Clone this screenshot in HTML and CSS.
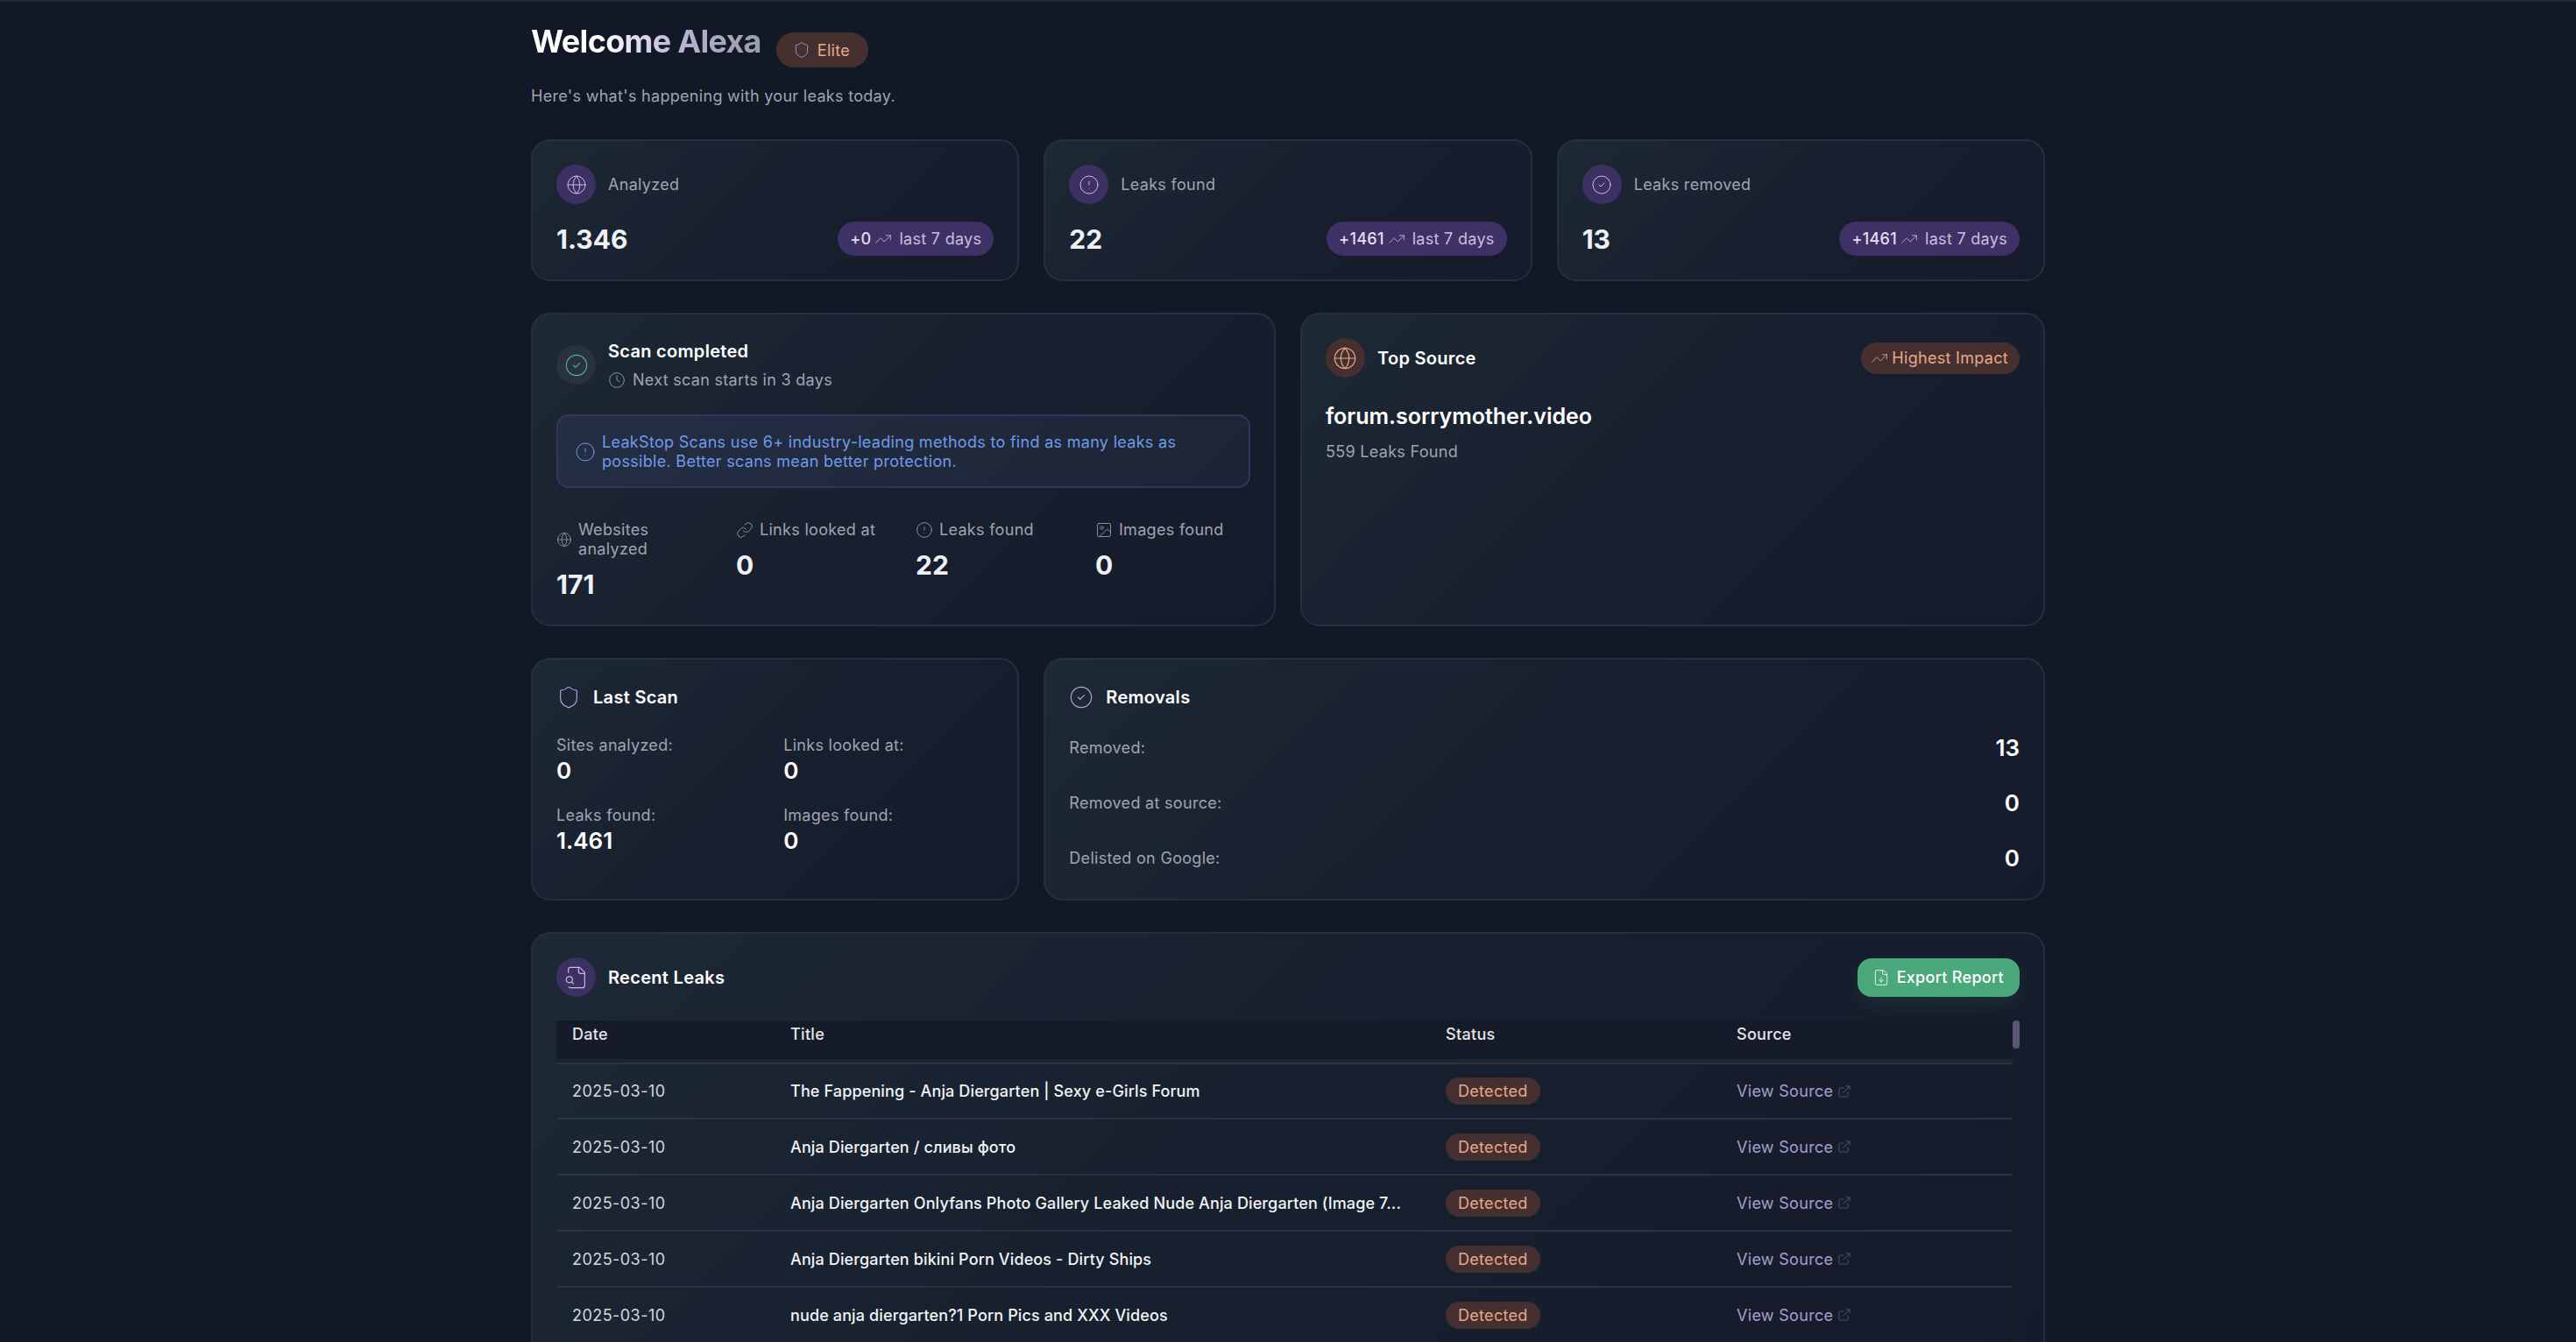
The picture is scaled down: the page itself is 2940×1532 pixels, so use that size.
FILE: index.html
```html
<!DOCTYPE html>
<html lang="en">
<head>
    <meta charset="UTF-8">
    <title>LeakStop Dashboard</title>
    <link rel="stylesheet" href="styles.css">
</head>
<body>
    <svg class="sprite" xmlns="http://www.w3.org/2000/svg">
        <symbol id="i-globe" viewBox="0 0 24 24"><circle cx="12" cy="12" r="10"/><path d="M12 2a14.5 14.5 0 0 0 0 20 14.5 14.5 0 0 0 0-20"/><path d="M2 12h20"/></symbol>
        <symbol id="i-shield" viewBox="0 0 24 24"><path d="M20 13c0 5-3.5 7.5-7.66 8.95a1 1 0 0 1-.67-.01C7.5 20.5 4 18 4 13V6a1 1 0 0 1 1-1c2 0 4.5-1.2 6.24-2.72a1.17 1.17 0 0 1 1.52 0C14.51 3.81 17 5 19 5a1 1 0 0 1 1 1z"/></symbol>
        <symbol id="i-alert" viewBox="0 0 24 24"><circle cx="12" cy="12" r="10"/><path d="M12 8v4"/><path d="M12 16h.01"/></symbol>
        <symbol id="i-check" viewBox="0 0 24 24"><circle cx="12" cy="12" r="10"/><path d="m9 12 2 2 4-4"/></symbol>
        <symbol id="i-trend" viewBox="0 0 24 24"><path d="M22 7l-8.5 8.5-5-5L2 17"/><path d="M16 7h6v6"/></symbol>
        <symbol id="i-clock" viewBox="0 0 24 24"><circle cx="12" cy="12" r="10"/><path d="M12 6v6l4 2"/></symbol>
        <symbol id="i-link" viewBox="0 0 24 24"><path d="M10 13a5 5 0 0 0 7.54.54l3-3a5 5 0 0 0-7.07-7.07l-1.72 1.71"/><path d="M14 11a5 5 0 0 0-7.54-.54l-3 3a5 5 0 0 0 7.07 7.07l1.71-1.71"/></symbol>
        <symbol id="i-image" viewBox="0 0 24 24"><rect x="3" y="3" width="18" height="18" rx="2"/><circle cx="9" cy="9" r="2"/><path d="m21 15-3.086-3.086a2 2 0 0 0-2.828 0L6 21"/></symbol>
        <symbol id="i-filesearch" viewBox="0 0 24 24"><path d="M14 2v4a2 2 0 0 0 2 2h4"/><path d="M4.268 21a2 2 0 0 0 1.727 1H18a2 2 0 0 0 2-2V7l-5-5H6a2 2 0 0 0-2 2v3"/><path d="m9 18-1.5-1.5"/><circle cx="5" cy="14" r="3"/></symbol>
        <symbol id="i-filedown" viewBox="0 0 24 24"><path d="M15 2H6a2 2 0 0 0-2 2v16a2 2 0 0 0 2 2h12a2 2 0 0 0 2-2V7Z"/><path d="M14 2v4a2 2 0 0 0 2 2h4"/><path d="M12 18v-6"/><path d="m9 15 3 3 3-3"/></symbol>
        <symbol id="i-external" viewBox="0 0 24 24"><path d="M15 3h6v6"/><path d="M10 14 21 3"/><path d="M18 13v6a2 2 0 0 1-2 2H5a2 2 0 0 1-2-2V8a2 2 0 0 1 2-2h6"/></symbol>
    </svg>

    <main class="page">
        <header class="welcome">
            <div class="welcome-top">
                <h1>Welcome Alexa</h1>
                <span class="elite"><svg class="icon icon-20 lilac"><use href="#i-shield"/></svg>Elite</span>
            </div>
            <p>Here's what's happening with your leaks today.</p>
        </header>

        <div class="dashboard">
            <section class="card span-2 stat-card">
                <div class="stat-head">
                    <span class="round purple"><svg class="icon icon-24"><use href="#i-globe"/></svg></span>
                    <span class="muted">Analyzed</span>
                </div>
                <div class="stat-foot">
                    <strong class="big">1.346</strong>
                    <span class="week"><b>+0</b><svg class="icon icon-20"><use href="#i-trend"/></svg><em>last 7 days</em></span>
                </div>
            </section>
            <section class="card span-2 stat-card">
                <div class="stat-head">
                    <span class="round purple"><svg class="icon icon-24"><use href="#i-alert"/></svg></span>
                    <span class="muted">Leaks found</span>
                </div>
                <div class="stat-foot">
                    <strong class="big">22</strong>
                    <span class="week"><b>+1461</b><svg class="icon icon-20"><use href="#i-trend"/></svg><em>last 7 days</em></span>
                </div>
            </section>
            <section class="card span-2 stat-card">
                <div class="stat-head">
                    <span class="round purple"><svg class="icon icon-24"><use href="#i-check"/></svg></span>
                    <span class="muted">Leaks removed</span>
                </div>
                <div class="stat-foot">
                    <strong class="big">13</strong>
                    <span class="week"><b>+1461</b><svg class="icon icon-20"><use href="#i-trend"/></svg><em>last 7 days</em></span>
                </div>
            </section>

            <section class="card span-3 scan-card">
                <div class="scan-head">
                    <span class="round slate"><svg class="icon icon-28 green"><use href="#i-check"/></svg></span>
                    <div>
                        <h2>Scan completed</h2>
                        <p class="next muted"><svg class="icon icon-20"><use href="#i-clock"/></svg>Next scan starts in 3 days</p>
                    </div>
                </div>
                <div class="note">
                    <svg class="icon icon-24"><use href="#i-alert"/></svg>
                    <p>LeakStop Scans use 6+ industry-leading methods to find as many leaks as possible. Better scans mean better protection.</p>
                </div>
                <div class="scan-stats">
                    <div>
                        <div class="scan-label muted"><svg class="icon icon-18"><use href="#i-globe"/></svg><span>Websites analyzed</span></div>
                        <strong class="big">171</strong>
                    </div>
                    <div>
                        <div class="scan-label muted"><svg class="icon icon-20"><use href="#i-link"/></svg><span>Links looked at</span></div>
                        <strong class="big">0</strong>
                    </div>
                    <div>
                        <div class="scan-label muted"><svg class="icon icon-20"><use href="#i-alert"/></svg><span>Leaks found</span></div>
                        <strong class="big">22</strong>
                    </div>
                    <div>
                        <div class="scan-label muted"><svg class="icon icon-20"><use href="#i-image"/></svg><span>Images found</span></div>
                        <strong class="big">0</strong>
                    </div>
                </div>
            </section>

            <section class="card span-3 source-card">
                <div class="source-head">
                    <div class="title-row">
                        <span class="round brown"><svg class="icon icon-28 peach"><use href="#i-globe"/></svg></span>
                        <h2>Top Source</h2>
                    </div>
                    <span class="impact"><svg class="icon icon-20"><use href="#i-trend"/></svg>Highest Impact</span>
                </div>
                <div class="domain">forum.sorrymother.video</div>
                <p class="muted source-count">559 Leaks Found</p>
            </section>

            <section class="card span-2 last-card">
                <div class="plain-head">
                    <svg class="icon icon-28 lilac"><use href="#i-shield"/></svg>
                    <h2>Last Scan</h2>
                </div>
                <div class="last-grid">
                    <div><span class="muted">Sites analyzed:</span><strong>0</strong></div>
                    <div><span class="muted">Links looked at:</span><strong>0</strong></div>
                    <div><span class="muted">Leaks found:</span><strong>1.461</strong></div>
                    <div><span class="muted">Images found:</span><strong>0</strong></div>
                </div>
            </section>

            <section class="card span-4 removal-card">
                <div class="plain-head">
                    <svg class="icon icon-28 lilac"><use href="#i-check"/></svg>
                    <h2>Removals</h2>
                </div>
                <div class="removal-list">
                    <div class="removal-row"><span class="muted">Removed:</span><strong>13</strong></div>
                    <div class="removal-row"><span class="muted">Removed at source:</span><strong>0</strong></div>
                    <div class="removal-row"><span class="muted">Delisted on Google:</span><strong>0</strong></div>
                </div>
            </section>

            <section class="card span-6 leaks-card">
                <div class="leaks-head">
                    <div class="title-row">
                        <span class="round purple"><svg class="icon icon-28"><use href="#i-filesearch"/></svg></span>
                        <h2>Recent Leaks</h2>
                    </div>
                    <button class="export"><svg class="icon icon-20"><use href="#i-filedown"/></svg>Export Report</button>
                </div>
                <div class="table-wrap">
                    <table class="leaks">
                        <thead>
                            <tr><th class="col-date">Date</th><th class="col-title">Title</th><th class="col-status">Status</th><th>Source</th></tr>
                        </thead>
                        <tbody>
                            <tr>
                                <td class="date">2025-03-10</td>
                                <td class="title">The Fappening - Anja Diergarten | Sexy e-Girls Forum</td>
                                <td><span class="status">Detected</span></td>
                                <td><a class="view" href="#">View Source<svg class="icon icon-16"><use href="#i-external"/></svg></a></td>
                            </tr>
                            <tr>
                                <td class="date">2025-03-10</td>
                                <td class="title">Anja Diergarten / сливы фото</td>
                                <td><span class="status">Detected</span></td>
                                <td><a class="view" href="#">View Source<svg class="icon icon-16"><use href="#i-external"/></svg></a></td>
                            </tr>
                            <tr>
                                <td class="date">2025-03-10</td>
                                <td class="title">Anja Diergarten Onlyfans Photo Gallery Leaked Nude Anja Diergarten (Image 7...</td>
                                <td><span class="status">Detected</span></td>
                                <td><a class="view" href="#">View Source<svg class="icon icon-16"><use href="#i-external"/></svg></a></td>
                            </tr>
                            <tr>
                                <td class="date">2025-03-10</td>
                                <td class="title">Anja Diergarten bikini Porn Videos - Dirty Ships</td>
                                <td><span class="status">Detected</span></td>
                                <td><a class="view" href="#">View Source<svg class="icon icon-16"><use href="#i-external"/></svg></a></td>
                            </tr>
                            <tr>
                                <td class="date">2025-03-10</td>
                                <td class="title">nude anja diergarten?1 Porn Pics and XXX Videos</td>
                                <td><span class="status">Detected</span></td>
                                <td><a class="view" href="#">View Source<svg class="icon icon-16"><use href="#i-external"/></svg></a></td>
                            </tr>
                        </tbody>
                    </table>
                    <div class="scrollbar"><div class="thumb"></div></div>
                </div>
            </section>
        </div>
    </main>
</body>
</html>
```

FILE: styles.css
```css
* {
    box-sizing: border-box;
}
html, body {
    height: 100%;
    overflow: hidden;
}
body {
    margin: 0;
    background-color: #111927;
    border-top: 2px solid #222c3e;
    font-family: Inter, "Noto Sans", sans-serif;
    font-size: 18px;
    letter-spacing: 0.3px;
    color: #fff;
}
h1, h2, p {
    margin: 0;
}
.sprite {
    display: none;
}
.page {
    width: 1728px;
    margin: 0 auto;
}

.icon {
    display: block;
    flex: none;
    fill: none;
    stroke: currentColor;
    stroke-width: 1;
    stroke-linecap: round;
    stroke-linejoin: round;
}
.icon-16 { width: 16px; height: 16px; }
.icon-18 { width: 18px; height: 18px; }
.icon-20 { width: 20px; height: 20px; }
.icon-24 { width: 24px; height: 24px; }
.icon-28 { width: 28px; height: 28px; }
.lilac { color: #b49fe0; }
.green { color: #4eb385; }
.peach { color: #e8a887; }
.muted { color: #a0a4b0; }

.welcome {
    padding-top: 20px;
}
.welcome-top {
    display: flex;
    align-items: flex-start;
    gap: 17px;
}
.welcome h1 {
    margin-top: 1px;
    font-size: 36px;
    line-height: 48px;
    font-weight: 700;
    letter-spacing: -0.7px;
    background: linear-gradient(90deg, #ffffff 30%, #b9b2d4 65%, #9a9ca8 100%);
    -webkit-background-clip: text;
    background-clip: text;
    color: transparent;
}
.elite {
    display: flex;
    align-items: center;
    gap: 8px;
    height: 40px;
    margin-top: 15px;
    padding: 0 21px 0 19px;
    border-radius: 20px;
    background-color: #45302f;
    color: #e8a887;
}
.welcome p {
    margin-top: 19px;
    line-height: 28px;
    color: #a0a4b0;
}

.dashboard {
    display: grid;
    grid-template-columns: repeat(6, 1fr);
    gap: 36px 28px;
    margin-top: 35px;
}
.span-2 { grid-column: span 2; }
.span-3 { grid-column: span 3; }
.span-4 { grid-column: span 4; }
.span-6 { grid-column: span 6; }

.card {
    padding: 27px;
    border: 2px solid #252f40;
    border-radius: 22px;
    background: linear-gradient(135deg, #1d2935 0%, #181f2e 50%, #151b2a 100%);
}
.card h2 {
    font-size: 20px;
    line-height: 28px;
    font-weight: 600;
}
.big {
    font-size: 30px;
    line-height: 36px;
    font-weight: 700;
    letter-spacing: 0;
    color: #eef0f5;
}
.round {
    display: flex;
    flex: none;
    align-items: center;
    justify-content: center;
    width: 45px;
    height: 45px;
    border-radius: 50%;
    color: #c5bce0;
}
.purple { background-color: #3d3164; }
.slate { background-color: #2a3242; }
.brown { background-color: #45302f; }
.title-row {
    display: flex;
    align-items: center;
    gap: 14px;
}

.stat-card {
    height: 162px;
}
.stat-head {
    display: flex;
    align-items: center;
    gap: 14px;
}
.stat-foot {
    display: flex;
    align-items: center;
    justify-content: space-between;
    margin-top: 20px;
}
.week {
    display: flex;
    align-items: center;
    height: 39px;
    padding: 0 14px;
    border-radius: 20px;
    background-color: #3d3166;
    color: #c6c0dc;
}
.week b {
    font-weight: 500;
    color: #e2dfee;
}
.week .icon {
    margin: 0 8px 0 4px;
}
.week em {
    font-style: normal;
}

.scan-card {
    height: 358px;
}
.scan-head {
    display: flex;
    align-items: center;
    gap: 14px;
}
.scan-head h2 {
    margin-top: 1px;
}
.next {
    display: flex;
    align-items: center;
    gap: 8px;
    margin-top: 6px;
    line-height: 26px;
}
.note {
    display: flex;
    align-items: center;
    gap: 7px;
    height: 84px;
    margin-top: 26px;
    padding: 2px 22px 0 19px;
    border: 2px solid #373260;
    border-radius: 14px;
    background: linear-gradient(135deg, #252f44, #1c2435);
    color: #6f9ae8;
    line-height: 22px;
}
.scan-stats {
    display: grid;
    grid-template-columns: repeat(4, 1fr);
    gap: 28px;
    margin-top: 37px;
}
.scan-label {
    display: flex;
    align-items: center;
    gap: 7px;
    margin-bottom: 11px;
    line-height: 22px;
}

.source-head {
    display: flex;
    align-items: center;
    justify-content: space-between;
}
.impact {
    display: flex;
    align-items: center;
    gap: 4px;
    height: 36px;
    padding: 0 13px 0 11px;
    border-radius: 18px;
    background-color: #45302f;
    color: #e8a887;
}
.domain {
    margin-top: 26px;
    font-size: 25px;
    line-height: 36px;
    font-weight: 600;
    letter-spacing: 0;
}
.source-count {
    margin-top: 10px;
    line-height: 26px;
}

.plain-head {
    display: flex;
    align-items: center;
    gap: 14px;
    padding-top: 2px;
}
.last-grid {
    display: grid;
    grid-template-columns: 1fr 1fr;
    gap: 22px 19px;
    margin-top: 28px;
}
.last-grid span {
    display: block;
    line-height: 26px;
}
.last-grid strong {
    display: block;
    font-size: 26px;
    line-height: 32px;
    font-weight: 600;
    letter-spacing: 0;
}
.removal-list {
    display: flex;
    flex-direction: column;
    gap: 23px;
    margin-top: 23px;
}
.removal-row {
    display: flex;
    align-items: center;
    justify-content: space-between;
    height: 40px;
}
.removal-row strong {
    font-size: 26px;
    font-weight: 600;
    letter-spacing: 0;
}

.leaks-head {
    display: flex;
    align-items: center;
    justify-content: space-between;
    margin-bottom: 27px;
}
.export {
    display: flex;
    align-items: center;
    gap: 8px;
    height: 44px;
    padding: 0 18px 0 17px;
    border: 0;
    border-radius: 16px;
    background-color: #4ba87b;
    box-shadow: 0 8px 20px rgba(75, 168, 123, 0.12);
    color: #fff;
    font-family: inherit;
    font-size: 18px;
    letter-spacing: 0.3px;
    font-weight: 500;
}
.table-wrap {
    display: flex;
}
.leaks {
    flex: 1;
    width: 100%;
    min-width: 0;
    table-layout: fixed;
    border-collapse: separate;
    border-spacing: 0;
}
.leaks th {
    height: 44px;
    padding: 0 18px 14px;
    text-align: left;
    font-weight: 500;
    color: #e4e5ea;
    background-color: #151b28;
    box-shadow: 0 4px 0 #1b2431, 0 6px 0 #2a3345;
}
.col-date { width: 249px; }
.col-title { width: 748px; }
.col-status { width: 332px; }
.leaks td {
    height: 64px;
    padding: 0 18px;
    border-bottom: 2px solid #2a3345;
}
.leaks tbody tr:first-child td {
    padding-top: 6px;
    height: 69px;
}
.leaks .date {
    letter-spacing: 0.45px;
    color: #d4d6de;
}
.leaks .title {
    white-space: nowrap;
    letter-spacing: 0.13px;
    font-weight: 500;
    color: #f2f3f6;
}
.status {
    display: inline-block;
    padding: 0 14px;
    border-radius: 16px;
    background-color: #45302f;
    color: #e8a887;
    line-height: 31px;
}
.view {
    display: flex;
    align-items: center;
    gap: 5px;
    color: #a89cd0;
    text-decoration: none;
}
.view .icon {
    color: #6f6d86;
}
.scrollbar {
    flex: none;
    width: 8px;
    background-color: #171e2b;
}
.thumb {
    height: 32px;
    border-radius: 4px;
    background-color: #5b5677;
}
```
